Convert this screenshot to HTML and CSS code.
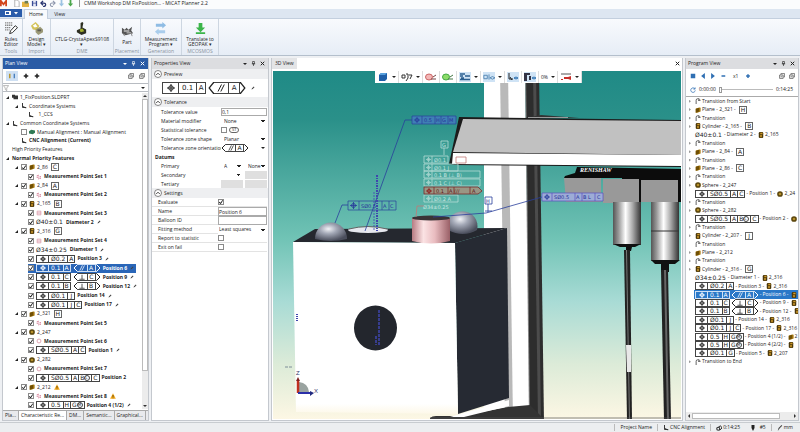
FILE: index.html
```
<!DOCTYPE html>
<html lang="en">
<head>
  <meta charset="UTF-8">
  <meta name="viewport" content="width=device-width, initial-scale=1.0">
  <title>CMM Workshop DM FixPosition... - MiCAT Planner 2.2</title>
  <link rel="stylesheet" href="styles.css">
</head>
<body>
  <!-- shared icons -->
  <svg class="defs" aria-hidden="true">
    <symbol id="pos" viewBox="0 0 8 8"><circle cx="4" cy="4" r="2.3" fill="none" stroke="currentColor"/><path d="M4 0v8M0 4h8" stroke="currentColor"/></symbol>
    <symbol id="par" viewBox="0 0 8 8"><path d="M1 7.500L4.500 .5M3.800 7.500L7.300 .5" stroke="currentColor" fill="none"/></symbol>
    <symbol id="perp" viewBox="0 0 8 8"><path d="M4 1v6M.5 7h7" stroke="currentColor" fill="none"/></symbol>
    <symbol id="hl" viewBox="0 0 5 8" preserveAspectRatio="none"><path d="M5 .5H4.500L1 4l3.500 3.500H5" stroke="currentColor" fill="none"/></symbol>
    <symbol id="hr" viewBox="0 0 5 8" preserveAspectRatio="none"><path d="M0 .5H.5L4 4 .5 7.500H0" stroke="currentColor" fill="none"/></symbol>
    <symbol id="axes" viewBox="0 0 8 8"><path d="M2 0v6h5M3 4l3 3" stroke="#333" stroke-width="1.300" fill="none"/></symbol>
    <symbol id="plane" viewBox="0 0 8 8"><path d="M1 2l5-1.500 1.500.5v5L3 7.500H1z" fill="#a87a10"/><path d="M1 2.500L5.500 1v5L1 7.500z" fill="#6f4f06"/></symbol>
    <symbol id="cyl" viewBox="0 0 8 8"><rect x="1" y="0" width="6" height="8" rx="1.500" fill="#4c380a"/><path d="M3 1h3v2H3zM3 4h2v3H3z" fill="#cf9a2b"/></symbol>
    <symbol id="sph" viewBox="0 0 8 8"><circle cx="4" cy="4" r="3.800" fill="#5a450c"/><circle cx="4" cy="4" r="1.800" fill="#b58f2a"/></symbol>
    <symbol id="ppl" viewBox="0 0 8 8"><path d="M1 2.500l3-1M1 4.500l6-1M3 6.500l4-1" stroke="#cf6a86" stroke-width="1.300" stroke-dasharray="1.500 .6"/></symbol>
    <symbol id="pcy" viewBox="0 0 8 8"><path d="M1.500 1.500h5v5h-5zM1.500 4h5" fill="#fbeef2" stroke="#d99aaa"/></symbol>
    <symbol id="psp" viewBox="0 0 8 8"><circle cx="4" cy="4" r="2.600" fill="#fff" stroke="#d58a9c"/></symbol>
    <symbol id="pen" viewBox="0 0 8 8"><path d="M1 7l1-2.500L5.500 1 7 2.500 3.500 6z" fill="#444"/></symbol>
    <symbol id="warn" viewBox="0 0 8 8"><path d="M4 .3L7.800 7.500H.2z" fill="#f2a91c"/><path d="M4 2.800v2.400M4 6v1" stroke="#3c2a00"/></symbol>
    <symbol id="trans" viewBox="0 0 8 8"><path d="M1.500 8V3q0-2 2-2h2v2.500M4 3h3.500" stroke="#333" fill="none"/></symbol>
    <symbol id="copy" viewBox="0 0 8 8"><path d="M2.500 2.500V.8h5v4.500H6M.8 2.700h4.700v4.500H.8zM2 5h2.500" stroke="#555" fill="none"/></symbol>
    <symbol id="pin" viewBox="0 0 8 8"><path d="M2.500.8h3v3.700h-3zM1.300 4.500h5.400M4 4.500V8" stroke="currentColor" fill="none"/></symbol>
    <symbol id="close" viewBox="0 0 8 8"><path d="M1.200 1.200l5.600 5.600M6.800 1.200L1.200 6.800" stroke="currentColor" stroke-width="1.600"/></symbol>
    <symbol id="up" viewBox="0 0 8 8"><circle cx="4" cy="4" r="3.500" fill="#fff" stroke="#555" stroke-width=".7"/><path d="M2.200 5L4 3.200 5.800 5" stroke="#333" fill="none" stroke-width=".9"/></symbol>
    <symbol id="cross" viewBox="0 0 8 8"><path d="M4 1v6M1 4h6" stroke="currentColor" stroke-width="2"/></symbol>
  </svg>

  <header class="titlebar">
    <svg class="ico app" viewBox="0 0 8 8"><path d="M1 7V1l3 4 3-4v6" stroke="#d2461e" stroke-width="2" fill="none"/></svg>
    <svg class="ico" viewBox="0 0 8 8"><path d="M2 0h3l2 2v6H2z" fill="#fff" stroke="#888" stroke-width=".7"/></svg>
    <svg class="ico" viewBox="0 0 8 8"><path d="M0 2h3l1 1h4v5H0z" fill="#e3b343"/><path d="M3 1h4v3H3z" fill="#6b7f57"/></svg>
    <svg class="ico" viewBox="0 0 8 8"><path d="M1 1h6v6H1z" fill="#3a4d96"/><path d="M2.500 4h3v3h-3zM2.500 1h3v2h-3z" fill="#e6e9f5"/></svg>
    <svg class="ico" viewBox="0 0 8 8"><path d="M1.500 3.500h3q2 0 2 2T3.500 7.500M3.500 1L1 3.500 3.500 6" stroke="#27336f" stroke-width="1.400" fill="none"/></svg>
    <svg class="ico" viewBox="0 0 8 8"><path d="M6.500 3.500h-3q-2 0-2 2T4.500 7.500M4.500 1L7 3.500 4.500 6" stroke="#8e97ad" stroke-width="1.200" fill="none"/></svg>
    <svg class="ico" viewBox="0 0 8 8"><path d="M3 0h2v4h2L4 7.500 1 4h2z" fill="#9cc3e2"/></svg>
    <svg class="ico" viewBox="0 0 8 8"><path d="M3 0h2v4h2L4 7.500 1 4h2z" fill="#4aa64b"/></svg>
    <h1>CMM Workshop DM FixPosition... - MiCAT Planner 2.2</h1>
  </header>

  <nav class="tabs">
    <button class="file" aria-label="File"><svg viewBox="0 0 16 6"><path d="M2 1h6v4H2z" fill="#fff"/><path d="M3 2h3v2H3z" fill="#2c5ca8"/><path d="M11 2h4l-2 2.500z" fill="#fff"/></svg></button>
    <button class="tab active">Home</button>
    <button class="tab">View</button>
  </nav>

  <div class="ribbon">
    <div class="group g-tools">
      <button><svg viewBox="0 0 14 14"><path d="M0 1h8M0 3.500h8M0 6h6M0 8.500h5" stroke="#888" stroke-width="1.400" stroke-dasharray="1.500 .6"/><path d="M5 12.500l1-3L11 4l2.500 2L8 11.500z" fill="#fff" stroke="#222"/></svg>Rules<br>Editor</button>
      <small>Tools</small>
    </div>
    <div class="group g-import">
      <button><svg viewBox="0 0 14 14"><path d="M1 4l5-4 4 4-2 5-5-1z" fill="#d4c35a"/><path d="M3 4l3-2 2 3-3 1z" fill="#fff"/><path d="M6 8l5-3 3 3v3l-5 3-3-3z" fill="#9c9a78"/><path d="M8 8h4v2H8z" fill="#5e5d50"/></svg>Design<br>Model ▾</button>
      <small>Import</small>
    </div>
    <div class="group g-dme">
      <button><svg viewBox="0 0 14 14"><path d="M2 9l4-2V1l2-1 1 1-1 5 4 2v4l-5 2-5-3z" fill="#2d2f22"/><path d="M5 8l3-1 2 3-4 1z" fill="#a3b02c"/></svg>CTLG-CrystaApexS9108<br>▾</button>
      <small>DME</small>
    </div>
    <div class="group g-place">
      <button><svg viewBox="0 0 14 14"><path d="M1 3l3 2 2-2 2 2 4-3-1 4 2 3-4 1-4 1-4-2z" fill="#555"/><path d="M3 6h6v1H3zM6 8h5v1H6z" fill="#eee"/><path d="M2 9l2 3M11 9l1 3" stroke="#888"/></svg>Part</button>
      <small>Placement</small>
    </div>
    <div class="group g-gen">
      <button><svg viewBox="0 0 14 14"><path d="M2 2h7V0l4 3.500L9 7V5H2z" fill="#8fbce4"/><path d="M12 9H5V7l-4 3.500L5 14v-2h7z" fill="#a9cdec"/></svg>Measurement<br>Program ▾</button>
      <small>Generation</small>
    </div>
    <div class="group g-mcos">
      <button><svg viewBox="0 0 14 14"><path d="M5 1h4v5h3L7 11 2 6h3zM2 11h10v2H2z" fill="#3bb54a"/></svg>Translate to<br>GEOPAK ▾</button>
      <small>MCOSMOS</small>
    </div>
  </div>

  <main>
    <section class="panel plan">
      <h2 class="head blue"><span>Plan View</span><i class="down"></i><svg><use href="#pin"/></svg><svg><use href="#close"/></svg></h2>
      <div class="tools">
        <button class="on" aria-label="Order"><svg class="wide" viewBox="0 0 12 8"><path d="M3 1v6" stroke="#b9962f" stroke-width="2"/><path d="M9 1v6" stroke="#2c6bb0" stroke-width="1.500"/></svg></button>
        <button aria-label="Expand"><svg><use href="#cross"/></svg></button>
        <button aria-label="Collapse"><svg><use href="#cross"/></svg></button>
        <span class="grow"></span>
        <button aria-label="Copy"><svg><use href="#copy"/></svg></button>
        <button aria-label="Copy all"><svg><use href="#copy"/></svg></button>
      </div>
      <div class="filter">
        <svg viewBox="0 0 8 8"><path d="M.5.8h7L5 4v3.500L3 6V4z" fill="none" stroke="#888" stroke-width=".8"/></svg>
        <input type="text" aria-label="Filter">
        <i class="down"></i>
      </div>
      <div class="treebox">
        <div class="tree">
          <ul class="top">
            <li><i class="arr"></i><svg class="wide" viewBox="0 0 8 8"><path d="M0 1h4v1h4v5H2V5H0z" fill="#333"/></svg>1_FixPosition.SLDPRT</li>
            <li class="l1"><i class="arr"></i><svg><use href="#axes"/></svg>Coordinate Systems</li>
            <li class="l3"><svg><use href="#axes"/></svg>&nbsp; 1_CCS</li>
            <li><i class="arr"></i><svg><use href="#axes"/></svg>Common Coordinate Systems</li>
            <li class="l2"><label><input type="checkbox"><svg viewBox="0 0 8 8"><path d="M0 3l3-2 5 1v3L5 7 0 6z" fill="#2f7a55"/></svg>Manual Alignment : Manual Alignment</label></li>
            <li class="l2 bold"><svg><use href="#axes"/></svg>CNC Alignment (Current)</li>
            <li class="l0">High Priority Features</li>
            <li class="bold"><i class="arr"></i>Normal Priority Features</li>
          </ul>
          <ul class="features">
            <li class="l1"><i class="arr"></i><label><input type="checkbox" checked><svg><use href="#plane"/></svg>2_86 <b class="datum">C</b></label></li>
            <li class="l3 bold"><label><input type="checkbox" checked><svg><use href="#ppl"/></svg>Measurement Point Set 1</label></li>
            <li class="l1"><i class="arr"></i><label><input type="checkbox" checked><svg><use href="#plane"/></svg>2_84 <b class="datum">A</b></label></li>
            <li class="l3 bold"><label><input type="checkbox" checked><svg><use href="#ppl"/></svg>Measurement Point Set 2</label></li>
            <li class="l1"><i class="arr"></i><label><input type="checkbox" checked><svg><use href="#cyl"/></svg>2_165 <b class="datum">B</b></label></li>
            <li class="l3 bold"><label><input type="checkbox" checked><svg><use href="#pcy"/></svg>Measurement Point Set 3</label></li>
            <li class="l3 bold"><label><input type="checkbox" checked><span class="dim">Ø40±0.1</span>Diameter 2<svg class="pen"><use href="#pen"/></svg></label></li>
            <li class="l1"><i class="arr"></i><label><input type="checkbox" checked><svg><use href="#cyl"/></svg>2_316 <b class="datum">G</b></label></li>
            <li class="l3 bold"><label><input type="checkbox" checked><svg><use href="#pcy"/></svg>Measurement Point Set 4</label></li>
            <li class="l3 bold"><label><input type="checkbox" checked><span class="dim">Ø34±0.25</span>Diameter 1<svg class="pen"><use href="#pen"/></svg></label></li>
            <li class="l3 bold"><label><input type="checkbox" checked><span class="fcf"><i><svg><use href="#pos"/></svg></i><i>Ø0.2</i><i>A</i></span>Position 3<svg class="pen"><use href="#pen"/></svg></label></li>
            <li class="l3 bold sel"><label><input type="checkbox" checked><span class="fcf"><i><svg><use href="#pos"/></svg></i><i>0.1</i><i>A</i></span><span class="fcf hex"><svg><use href="#hl"/></svg><i><svg><use href="#par"/></svg></i><i>A</i><svg><use href="#hr"/></svg></span>Position 6<svg class="pen"><use href="#pen"/></svg></label></li>
            <li class="l3 bold"><label><input type="checkbox" checked><span class="fcf"><i><svg><use href="#pos"/></svg></i><i>0.1</i><i>C</i></span><span class="fcf hex"><svg><use href="#hl"/></svg><i><svg><use href="#perp"/></svg></i><i>C</i><svg><use href="#hr"/></svg></span>Position 9<svg class="pen"><use href="#pen"/></svg></label></li>
            <li class="l3 bold"><label><input type="checkbox" checked><span class="fcf"><i><svg><use href="#pos"/></svg></i><i>0.1</i><i>B</i></span><span class="fcf hex"><svg><use href="#hl"/></svg><i><svg><use href="#perp"/></svg></i><i>B</i><svg><use href="#hr"/></svg></span>Position 12<svg class="pen"><use href="#pen"/></svg></label></li>
            <li class="l3 bold"><label><input type="checkbox" checked><span class="fcf"><i><svg><use href="#pos"/></svg></i><i>Ø0.1</i><i>J</i></span>Position 14<svg class="pen"><use href="#pen"/></svg></label></li>
            <li class="l3 bold"><label><input type="checkbox" checked><span class="fcf"><i><svg><use href="#pos"/></svg></i><i>Ø0.1</i><i>J</i><i>C</i></span>Position 17<svg class="pen"><use href="#pen"/></svg></label></li>
            <li class="l1"><i class="arr"></i><label><input type="checkbox" checked><svg><use href="#plane"/></svg>2_321 <b class="datum">H</b></label></li>
            <li class="l3 bold"><label><input type="checkbox" checked><svg><use href="#ppl"/></svg>Measurement Point Set 5</label></li>
            <li class="l1"><i class="arr"></i><label><input type="checkbox" checked><svg><use href="#sph"/></svg>2_247</label></li>
            <li class="l3 bold"><label><input type="checkbox" checked><svg><use href="#psp"/></svg>Measurement Point Set 6</label></li>
            <li class="l3 bold"><label><input type="checkbox" checked><span class="fcf"><i><svg><use href="#pos"/></svg></i><i>SØ0.5</i><i>A</i><i>C</i></span>Position 1<svg class="pen"><use href="#pen"/></svg></label></li>
            <li class="l1"><i class="arr"></i><label><input type="checkbox" checked><svg><use href="#sph"/></svg>2_282</label></li>
            <li class="l3 bold"><label><input type="checkbox" checked><svg><use href="#psp"/></svg>Measurement Point Set 7</label></li>
            <li class="l3 bold"><label><input type="checkbox" checked><span class="fcf"><i><svg><use href="#pos"/></svg></i><i>SØ0.5</i><i>A</i><i>B<b class="mod">L</b></i><i>C</i></span>Position 2</label></li>
            <li class="l1"><i class="arr"></i><label><input type="checkbox" checked><svg><use href="#plane"/></svg>2_212 <svg class="warn"><use href="#warn"/></svg></label></li>
            <li class="l3 bold"><label><input type="checkbox" checked><svg><use href="#ppl"/></svg>Measurement Point Set 8 <svg class="warn"><use href="#warn"/></svg></label></li>
            <li class="l3 bold"><label><input type="checkbox" checked><span class="fcf"><i><svg><use href="#pos"/></svg></i><i>0.5</i><i>H</i><i>G<b class="mod">M</b></i></span>Position 4 (1/2)<svg class="pen"><use href="#pen"/></svg></label></li>
          </ul>
        </div>
        <div class="vscroll"><i></i><b></b><i class="dn"></i></div>
      </div>
      <nav class="bottom-tabs">
        <button>Pla...</button><button class="active">Characteristic Re...</button><button>DM...</button><button>Semantic...</button><button>Graphical...</button>
      </nav>
    </section>

    <section class="panel props">
      <h2 class="head"><span>Properties View</span><i class="down"></i><svg><use href="#pin"/></svg><svg><use href="#close"/></svg></h2>
      <h3><svg><use href="#up"/></svg>Preview</h3>
      <div class="preview">
        <span class="fcf big"><i><svg><use href="#pos"/></svg></i><i>0.1</i><i>A</i></span><span class="fcf hex big"><svg><use href="#hl"/></svg><i><svg><use href="#par"/></svg></i><i>A</i><svg><use href="#hr"/></svg></span><svg class="pen"><use href="#pen"/></svg>
      </div>
      <h3><svg><use href="#up"/></svg>Tolerance</h3>
      <div class="fields">
        <label for="tol">Tolerance value</label><input id="tol" type="text" value="0,1">
        <label for="mat">Material modifier</label><select id="mat"><option>None</option></select>
        <label for="stat">Statistical tolerance</label><span class="pair"><input id="stat" type="checkbox"><em>ST</em></span>
        <label for="shape">Tolerance zone shape</label><select id="shape"><option>Planar</option></select>
        <label for="orient">Tolerance zone orientation</label><button id="orient" class="orient"><span class="fcf hex"><svg><use href="#hl"/></svg><i><svg><use href="#par"/></svg></i><i>A</i><svg><use href="#hr"/></svg></span><i class="down"></i></button>
        <h4>Datums</h4>
        <label for="d1">Primary</label><span class="two"><select id="d1"><option>A</option></select><select aria-label="Primary modifier"><option>None</option></select></span>
        <label for="d2">Secondary</label><span class="two"><select id="d2"></select><select class="off" disabled aria-label="Secondary modifier"></select></span>
        <label for="d3">Tertiary</label><span class="two"><select id="d3" class="off" disabled></select><select class="off" disabled aria-label="Tertiary modifier"></select></span>
      </div>
      <h3><svg><use href="#up"/></svg>Settings</h3>
      <div class="fields settings">
        <label for="ev">Evaluate</label><span><input id="ev" type="checkbox" checked></span>
        <label for="nm">Name</label><input id="nm" type="text" value="Position 6">
        <label for="bal">Balloon ID</label><input id="bal" type="text">
        <label for="fit">Fitting method</label><select id="fit"><option>Least squares</option></select>
        <label for="rep">Report to statistic</label><span><input id="rep" type="checkbox"></span>
        <label for="ex">Exit on fail</label><span><input id="ex" type="checkbox"></span>
      </div>
    </section>

    <section class="panel view3d">
      <h2 class="head plain"><span>3D View</span><svg><use href="#close"/></svg></h2>
      <div class="viewport">
        <svg class="scene" viewBox="272 71 410 348" preserveAspectRatio="xMidYMid slice" role="img" aria-label="Workpiece under probe">
          <defs>
            <linearGradient id="sky" x1="0" y1="0" x2="0" y2="1"><stop offset="0" stop-color="#1f8a86"/><stop offset=".14" stop-color="#2a9089"/><stop offset=".48" stop-color="#70c3b5"/><stop offset=".66" stop-color="#a8dbd5"/><stop offset=".84" stop-color="#dcebd8"/><stop offset="1" stop-color="#fdf7e4"/></linearGradient>
            <linearGradient id="face" x1="0" y1="0" x2="0" y2="1"><stop offset=".94" stop-color="#fff"/><stop offset="1" stop-color="#fdf8e8"/></linearGradient>
            <linearGradient id="metal"><stop offset="0" stop-color="#555"/><stop offset=".2" stop-color="#999"/><stop offset=".45" stop-color="#fff"/><stop offset=".7" stop-color="#aaa"/><stop offset="1" stop-color="#333"/></linearGradient>
            <linearGradient id="pink"><stop offset="0" stop-color="#b77b82"/><stop offset=".3" stop-color="#fbe3e4"/><stop offset=".6" stop-color="#e9bcc0"/><stop offset="1" stop-color="#9a6067"/></linearGradient>
            <radialGradient id="ball" cx=".42" cy=".35" r=".65"><stop offset="0" stop-color="#f2f3f7"/><stop offset=".4" stop-color="#a3a8b6"/><stop offset="1" stop-color="#4a4e5c"/></radialGradient>
          </defs>
          <rect x="200" y="70" width="600" height="350" fill="url(#sky)"/>
          <!-- column -->
          <path d="M484 71h41l5 350h-46z" fill="#fff"/>
          <path d="M500 71h8l5 350h-8z" fill="#b9b9b9"/>
          <path d="M525 71h2l5 350h-3z" fill="#888"/>
          <path d="M526 71h13l5 350h-14z" fill="#2d2d2d"/>
          <path d="M533 71h3l5 350h-3z" fill="#4c4c4c"/>
          <path d="M525 118l16-3 38 3z" fill="#333"/><path d="M528 118v-1h40v1z" fill="#999"/>
          <!-- bridge -->
          <path d="M459 117l223 3v47l-227-2-6-1z" fill="#1c1c1c"/>
          <path d="M463 119l219 2v34l-229-3z" fill="#c1c1c1"/>
          <path d="M453 153l229 2v11l-230-2z" fill="#fff"/>
          <!-- probe head -->
          <path d="M577 167l105 2v33h-60V178h-58l1-2 10-3z" fill="#0c0c0c"/>
          <path d="M564 178h37v24h-35zM603 179h36v24h-36zM641 180h37v22h-37z" fill="#999"/>
          <text x="580" y="172" class="brand">RENISHAW</text>
          <path d="M613 202h28v43h-28z" fill="url(#metal)"/><path d="M613 244h28l-6 3h-3l-1 4h-5v-4h-6z" fill="#111"/>
          <path d="M651 202h28v59h-28z" fill="url(#metal)"/><path d="M651 231h28" stroke="#333"/><path d="M651 260h29l-5 4h-6v8h-8v-8h-6z" fill="#111"/>
          <path d="M624 250h6l2 170h-5z" fill="#222"/><path d="M626 250h1l3 170h-1z" fill="#777"/><path d="M626 345h5v27h-4z" fill="#e8e8e8"/>
          <path d="M661 270h7l3 150h-7z" fill="#222"/><path d="M664 270h2l3 150h-2z" fill="#666"/>
          <!-- base -->
          <path d="M430 418q2-2 6-2h24l48-9 22-2 13 13v3H430z" fill="#333"/>
          <path d="M450 417l59-17v6l-45 11z" fill="#fff"/>
          <path d="M430 418h252" stroke="#555" stroke-width=".7"/>
          <!-- block -->
          <path d="M293 242l22-13 192-1-52 15z" fill="#25282f"/>
          <path d="M455 243l52-15 2 170-51 16z" fill="#262a33"/>
          <path d="M293 242l162 1 3 171-162-2z" fill="url(#face)"/>
          <ellipse cx="368" cy="230" rx="20" ry="3" fill="#e6e8ee"/><path d="M349 229q19-5 38 0" stroke="#666" fill="none"/>
          <path d="M315 239a15.500 16 0 1 1 32 0q-16 4-32 0z" fill="url(#ball)"/>
          <path d="M448 230a15 15 0 1 1 29 0q-14 8-29 0z" fill="url(#ball)"/>
          <path d="M412 218v23q19 5 38 0v-23z" fill="url(#pink)"/><ellipse cx="431" cy="218" rx="19" ry="2.500" fill="#3a3336"/>
          <ellipse cx="375.500" cy="328" rx="21.500" ry="22.500" fill="#23262d"/>
          <!-- callouts -->
          <g fill="none" stroke="#2a3f9c">
            <path d="M365 231l40-111h7M335 223l7-18h6M433 217l53-4 56-16" stroke-width=".8"/>
            <path d="M412 116h44v8h-44zM422 116v8M435 116v8M441 116v8M448 116v8" fill="#3f7fb4" stroke-width=".7"/>
            <path d="M348 201h48v9h-48zM359 201v9M382 201v9M389 201v9" stroke-width=".7"/>
            <path d="M542 193h61v8h-61zM552 193v8M575 193v8M582 193v8M595 193v8" stroke="#5a4fc0" fill="#9dacd6" stroke-width=".7"/>
            <path d="M485 197h7v7h-7zM488 204v8M485 211h7" stroke-width=".8"/>
          </g>
          <g class="ctext blue3d">
            <text x="424" y="122">0.5</text><text x="436" y="122">H</text><text x="442" y="122">G</text><text x="449" y="122">M</text>
            <text x="361" y="208">SØ0.5</text><text x="383" y="208">A</text><text x="390" y="208">C</text>
            <text x="554" y="199">SØ0.5</text><text x="576" y="199">A</text><text x="583" y="199">B L</text><text x="597" y="199">C</text>
            <text x="486" y="203">H</text>
          </g>
          <g color="#2a3f9c"><use href="#pos" x="414" y="117" width="6" height="6"/><use href="#pos" x="350" y="202" width="7" height="7"/><use href="#pos" x="544" y="194" width="6" height="6"/></g>
          <g stroke="#3f46ae" fill="none"><path d="M377 175v56" stroke-width="2" stroke-dasharray="2 1 1 1"/><path d="M379 310v36M376 336v9" stroke-width="1.500" stroke-dasharray="3 1"/><path d="M374 192v38" stroke-width=".8" stroke-dasharray="2 1"/><path d="M297 314v8" stroke-width="2" stroke-dasharray="1 1"/></g>
          <g fill="none" stroke="#b5dcd6" stroke-width=".8">
            <path d="M441 141h7v7h-7zM444 148v7"/>
            <path d="M424 156h24v7h-24zM432 156v7M424 164h34v7h-34zM432 164v7M424 171h56v7h-56zM432 171v7M424 179h56v7h-56zM432 179v7M424 195h34v7h-34zM432 195v7"/>
          </g>
          <g class="ctext white3d">
            <text x="442" y="147">G</text><text x="434" y="162">Ø0.1</text><text x="434" y="170">Ø0.1 J</text><text x="434" y="177">0.1 B ⟨⊥ B⟩</text><text x="434" y="185">0.1 C ⟨⊥ C⟩</text><text x="434" y="201">Ø0.2 A</text><text x="423" y="209">Ø34±0.25</text>
          </g>
          <g color="#b5dcd6"><use href="#pos" x="426" y="157" width="5" height="5"/><use href="#pos" x="426" y="165" width="5" height="5"/><use href="#pos" x="426" y="172" width="5" height="5"/><use href="#pos" x="426" y="180" width="5" height="5"/><use href="#pos" x="426" y="196" width="5" height="5"/></g>
          <path d="M456 157h10v6h-10zM416 217l1-11h7" fill="none" stroke="#c07a76" stroke-width=".8"/>
          <path d="M424 187h54l4 4-4 3h-54zM434 187v7M448 187v7M454 187v7M470 187v7" fill="#9a9684" stroke="#7a2a2a" stroke-width=".8"/>
          <use href="#pos" x="426" y="188" width="6" height="6" color="#8c1d1d"/>
          <text x="436" y="193" class="ctext red3d">0.1</text><text x="449" y="193" class="ctext red3d">A ⟨//</text><text x="472" y="193" class="ctext red3d">A</text>
          <!-- axis triad -->
          <path d="M299 392v-10q9 1 10 10z" fill="#9aa3a0"/><path d="M298 393v-12" stroke="#c03020" stroke-width="2.500"/><path d="M296 381l2-4 2 4z" fill="#802020"/>
          <path d="M298 393h13" stroke="#2a2fa8" stroke-width="2"/><path d="M310 391l4 2-4 3z" fill="#222a80"/>
          <text x="296" y="375" class="axis">Z</text><text x="314" y="393" class="axis">X</text>
          <path d="M285 367h8" stroke="#678" stroke-width=".8" stroke-dasharray="3 1"/>
        </svg>
        <div class="viewbar">
          <button aria-label="Cube"><svg viewBox="0 0 10 8"><path d="M1 2l2-2h6v6L7 8H1z" fill="#1f5fa8"/><path d="M1 2l2-2h6L7 2z" fill="#58a0dd"/></svg><i class="down"></i></button>
          <button aria-label="Orientation"><svg viewBox="0 0 10 8"><path d="M0 2h3v3H0zM4 1h2v4L4 8M7 2h3L8 6" stroke="#333" fill="none"/></svg><i class="down"></i></button>
          <button aria-label="Hide"><svg viewBox="0 0 12 8"><ellipse cx="4" cy="4" rx="3.500" ry="3" fill="#f3b6b6" stroke="#c66"/><path d="M6 6h5M8 4l3-2" stroke="#744"/></svg></button>
          <button aria-label="Show"><svg viewBox="0 0 12 8"><ellipse cx="4" cy="4" rx="3.500" ry="3" fill="#8ddc6a" stroke="#4a4"/><path d="M6 6h5M8 4l3-2" stroke="#474"/></svg></button>
          <button aria-label="Labels"><svg class="on" viewBox="0 0 12 8"><path d="M1 1h5M1 3h3M6 3h5M1 6.500h10M2 5h3" stroke="#2c6090" stroke-width="1.300"/></svg><i class="down"></i></button>
          <button aria-label="Points"><svg class="on" viewBox="0 0 14 8"><path d="M1 2h4v4H1zM7 1v6M8 5q3-3 6 0-3 3-6 0" stroke="#4a7fae" fill="none"/></svg><i class="down"></i></button>
          <button aria-label="Axes"><svg class="on" viewBox="0 0 12 8"><path d="M2 0v6h4M3 4l2 3" stroke="#222" fill="none"/><path d="M7 5q2-2 4 0-2 2-4 0" stroke="#2c70b0" fill="none"/></svg></button>
          <button aria-label="Machine"><svg class="on" viewBox="0 0 12 8"><path d="M0 0h6v2H3v6H0zM5 3h2v4H5z" fill="#334"/><path d="M8 5q2-2 4 0-2 2-4 0" stroke="#2c70b0" fill="none"/></svg></button>
          <button class="pct">0%<i class="down"></i></button>
          <button aria-label="Record"><svg viewBox="0 0 12 8"><path d="M1 1h10" stroke="#555"/><path d="M4 4h4l3-1v4l-3-1H4zM1 6h2v1H1z" fill="#c8302a"/></svg><i class="down"></i></button>
        </div>
      </div>
    </section>

    <section class="panel program">
      <h2 class="head"><span>Program View</span><i class="down"></i><svg><use href="#pin"/></svg><svg><use href="#close"/></svg></h2>
      <div class="play">
        <button aria-label="Stop"><svg viewBox="0 0 8 8"><path d="M1 1h6v6H1z"/></svg></button>
        <button aria-label="Back"><svg viewBox="0 0 8 8"><path d="M6.500 0v8L1.500 4z"/></svg></button>
        <button aria-label="Play"><svg viewBox="0 0 8 8"><path d="M1.500 0v8l5-4z"/></svg></button>
        <button aria-label="Slower"><svg viewBox="0 0 8 8"><path d="M2 3h5v2H2z"/></svg></button>
        <span>x1</span>
        <button aria-label="Faster"><svg viewBox="0 0 8 8"><path d="M3 1.500h2V3h1.500v2H5v1.500H3V5H1.500V3H3z"/></svg></button>
        <span class="grow"></span>
        <button aria-label="Copy"><svg><use href="#copy"/></svg></button>
        <button aria-label="Copy all"><svg><use href="#copy"/></svg></button>
      </div>
      <div class="time">
        <svg viewBox="0 0 8 8"><path d="M6.500 2.500A3 3 0 1 0 7 4.500M6.800.5v2.300H4.500" fill="none" stroke="#2f6fb3"/></svg>
        <span>0:00:00</span><input type="range" min="0" max="100" value="0" aria-label="Time"><span>0:14:25</span>
      </div>
      <ul class="steps">
        <li><i class="ex"></i><svg><use href="#trans"/></svg>Transition from Start</li>
        <li><i class="ex"></i><svg><use href="#plane"/></svg>Plane - 2_321 - <b class="datum">H</b></li>
        <li><i class="ex"></i><svg><use href="#trans"/></svg>Transition</li>
        <li><i class="ex"></i><svg><use href="#cyl"/></svg>Cylinder - 2_165 - <b class="datum">B</b></li>
        <li><i class="ex none"></i><span class="dim">Ø40±0.1</span>- Diameter 2 - <svg><use href="#cyl"/></svg>2_165</li>
        <li><i class="ex"></i><svg><use href="#trans"/></svg>Transition</li>
        <li><i class="ex"></i><svg><use href="#plane"/></svg>Plane - 2_84 - <b class="datum">A</b></li>
        <li><i class="ex"></i><svg><use href="#trans"/></svg>Transition</li>
        <li><i class="ex"></i><svg><use href="#plane"/></svg>Plane - 2_86 - <b class="datum">C</b></li>
        <li><i class="ex"></i><svg><use href="#trans"/></svg>Transition</li>
        <li><i class="ex"></i><svg><use href="#sph"/></svg>Sphere - 2_247</li>
        <li><i class="ex none"></i><span class="fcf"><i><svg><use href="#pos"/></svg></i><i>SØ0.5</i><i>A</i><i>C</i></span>- Position 1 - <svg><use href="#sph"/></svg>2_24</li>
        <li><i class="ex"></i><svg><use href="#trans"/></svg>Transition</li>
        <li><i class="ex"></i><svg><use href="#sph"/></svg>Sphere - 2_282</li>
        <li><i class="ex none"></i><span class="fcf"><i><svg><use href="#pos"/></svg></i><i>SØ0.5</i><i>A</i><i>B<b class="mod">L</b></i><i>C</i></span>- Position 2 - <svg><use href="#sph"/></svg></li>
        <li><i class="ex"></i><svg><use href="#trans"/></svg>Transition</li>
        <li><i class="ex"></i><svg><use href="#cyl"/></svg>Cylinder - 2_207 - <b class="datum">J</b></li>
        <li><i class="ex none"></i><svg><use href="#trans"/></svg>Transition</li>
        <li><i class="ex"></i><svg><use href="#plane"/></svg>Plane - 2_212</li>
        <li><i class="ex"></i><svg><use href="#trans"/></svg>Transition</li>
        <li><i class="ex"></i><svg><use href="#cyl"/></svg>Cylinder - 2_316 - <b class="datum">G</b></li>
        <li><i class="ex none"></i><span class="dim">Ø34±0.25</span>- Diameter 1 - <svg><use href="#cyl"/></svg>2_316</li>
        <li><i class="ex none"></i><span class="fcf"><i><svg><use href="#pos"/></svg></i><i>Ø0.2</i><i>A</i></span>- Position 3 - <svg><use href="#cyl"/></svg>2_316</li>
        <li class="sel"><i class="ex none"></i><span class="fcf"><i><svg><use href="#pos"/></svg></i><i>0.1</i><i>A</i></span><span class="fcf hex"><svg><use href="#hl"/></svg><i><svg><use href="#par"/></svg></i><i>A</i><svg><use href="#hr"/></svg></span>- Position 6 - <svg><use href="#cyl"/></svg></li>
        <li><i class="ex none"></i><span class="fcf"><i><svg><use href="#pos"/></svg></i><i>0.1</i><i>C</i></span><span class="fcf hex"><svg><use href="#hl"/></svg><i><svg><use href="#perp"/></svg></i><i>C</i><svg><use href="#hr"/></svg></span>- Position 9 - <svg><use href="#cyl"/></svg></li>
        <li><i class="ex none"></i><span class="fcf"><i><svg><use href="#pos"/></svg></i><i>0.1</i><i>B</i></span><span class="fcf hex"><svg><use href="#hl"/></svg><i><svg><use href="#perp"/></svg></i><i>B</i><svg><use href="#hr"/></svg></span>- Position 12 - <svg><use href="#cyl"/></svg></li>
        <li><i class="ex none"></i><span class="fcf"><i><svg><use href="#pos"/></svg></i><i>Ø0.1</i><i>J</i></span>- Position 14 - <svg><use href="#cyl"/></svg>2_316</li>
        <li><i class="ex none"></i><span class="fcf"><i><svg><use href="#pos"/></svg></i><i>Ø0.1</i><i>J</i><i>C</i></span>- Position 17 - <svg><use href="#cyl"/></svg>2_316</li>
        <li><i class="ex none"></i><span class="fcf"><i><svg><use href="#pos"/></svg></i><i>0.5</i><i>H</i><i>G<b class="mod">M</b></i></span>- Position 4 (1/2) - <svg><use href="#plane"/></svg>2</li>
        <li><i class="ex none"></i><span class="fcf"><i><svg><use href="#pos"/></svg></i><i>0.5</i><i>H</i><i>G<b class="mod">M</b></i></span>- Position 4 (2/2) - <svg><use href="#cyl"/></svg></li>
        <li><i class="ex none"></i><span class="fcf"><i><svg><use href="#pos"/></svg></i><i>Ø0.1</i><i>G</i></span>- Position 5 - <svg><use href="#cyl"/></svg>2_207</li>
        <li><i class="ex"></i><svg><use href="#trans"/></svg>Transition to End</li>
      </ul>
      <div class="hscroll"><i></i><b></b><i class="rt"></i></div>
    </section>
  </main>

  <footer class="status">
    <span>Project Name</span>
    <span><svg><use href="#axes"/></svg>CNC Alignment</span>
    <span><svg viewBox="0 0 8 8"><circle cx="3" cy="5" r="2" fill="none" stroke="#333" stroke-width="1.500"/><path d="M3 3l3-2 2 3-3 3" stroke="#333" stroke-width="1.300" fill="none"/></svg>0:14:25</span>
    <span class="open"><svg viewBox="0 0 8 8"><path d="M2 0h4v4L4 8 2 4z" fill="#222"/></svg>&nbsp; #5</span>
    <span><svg viewBox="0 0 8 8"><path d="M1 8l1-4 4-4 1 1-3 3z" fill="#444"/></svg>mm</span>
  </footer>
</body>
</html>
```
FILE: styles.css
```
* {
  margin: 0;
  padding: 0;
  box-sizing: border-box;
}

html, body {
  height: 100%;
  overflow: hidden;
}

body {
  display: flex;
  flex-direction: column;
  background: #eef0f3;
  color: #222;
  font-family: "Open Sans", "Noto Sans", sans-serif;
  font-size: 5px;
  line-height: 7px;
}

button, input, select {
  font: inherit;
  color: inherit;
  background: none;
  border: none;
  border-radius: 0;
  appearance: none;
  min-width: 0;
}

ul { list-style: none; }
i, em { font-style: normal; }
svg { width: 6px; height: 6px; flex: none; }
.defs { position: absolute; width: 0; height: 0; }
.grow { flex: 1; }

/* title, tabs, ribbon */
.titlebar {
  display: flex;
  align-items: center;
  gap: 2px;
  height: 9px;
  padding-bottom: 2px;
  background: #fbfcfd;
}

.titlebar .ico { width: 7px; height: 7px; }
.titlebar .app { margin-right: 4px; }

.titlebar h1 {
  font-size: 5px;
  font-weight: normal;
  margin-left: 3px;
  padding-left: 4px;
  border-left: 1px solid #999;
}

.tabs {
  display: flex;
  align-items: stretch;
  height: 10px;
  background: #dde6f1;
  border-bottom: 1px solid #c3cfde;
}

.file {
  width: 22px;
  height: 8px;
  background: #2a5caa;
}

.file svg { display: block; width: 16px; height: 6px; margin: 0 auto; }

.tab { padding: 1px 6px 0; }

.tab.active {
  margin: 0 0 -1px 2px;
  padding: 0 4px;
  background: #f8fafd;
  border: 1px solid #c3cfde;
  border-bottom: none;
}

.ribbon {
  display: flex;
  height: 37px;
  background: linear-gradient(#f8fafd, #e6edf6);
  border-bottom: 1px solid #b4bfcc;
}

.group {
  display: flex;
  flex-direction: column;
  align-items: center;
  justify-content: space-between;
  border-right: 1px solid #cdd6e1;
  padding: 2px 0 1px;
}

.group button { line-height: 5px; height: 27px; }
.group svg { display: block; width: 13px; height: 13px; margin: 0 auto 2px; }
.group small { font-size: 5px; line-height: 6px; color: #8a93a0; }
.g-tools { width: 23px; }
.g-import { width: 28px; }
.g-dme { width: 63px; }
.g-place { width: 27px; }
.g-gen { width: 41px; }
.g-mcos { width: 37px; }

/* panels */
main {
  flex: 1;
  min-height: 0;
  display: grid;
  grid-template-columns: 147px 118px 1fr 114px;
  gap: 2px;
  padding: 2px 1px 1px 2px;
}

.panel {
  display: flex;
  flex-direction: column;
  min-width: 0;
  min-height: 0;
  background: #fff;
  border: 1px solid #c4c8ce;
  border-top: none;
  overflow: hidden;
}

.head {
  display: flex;
  align-items: center;
  gap: 4px;
  height: 11px;
  flex: none;
  padding: 0 3px 0 2px;
  background: #dcdde0;
  font-size: 5px;
  font-weight: normal;
}

.head span { flex: 1; }
.head svg { width: 5px; height: 5px; }
.head.blue { background: #2a5ba5; color: #fff; }
.head.plain { background: #fff; padding: 0 2px 0 0; }
.head.plain span { flex: none; background: #e3e4e6; padding: 2px 3px; margin-right: auto; }

.down {
  border: 2px solid transparent;
  border-top-color: currentColor;
  border-bottom: none;
  width: 4px;
  height: 2px;
  flex: none;
}

.tools, .play {
  display: flex;
  align-items: center;
  gap: 5px;
  height: 14px;
  flex: none;
  padding: 0 3px;
}

.tools button, .play button { display: flex; }
.tools .on { background: #cfe0f3; padding: 2px 0; }
.tools .wide { width: 12px; }

.filter {
  display: flex;
  align-items: center;
  height: 9px;
  flex: none;
  border: 1px solid #b8bcc2;
  border-width: 1px 0;
  padding-right: 3px;
}

.filter input { flex: 1; height: 7px; }

.treebox { flex: 1; display: flex; min-height: 0; padding-top: 1px; }

.tree { flex: 1; min-width: 0; display: flex; flex-direction: column; overflow: hidden; }
.tree ul { display: flex; flex-direction: column; }
.tree .top { flex: 70 1 0; }
.tree .features { flex: 248 1 0; }

.tree li {
  flex: 1 1 0;
  min-height: 0;
  display: flex;
  align-items: center;
  gap: 2px;
  padding-left: 3px;
  white-space: nowrap;
}

.tree label { display: flex; align-items: center; gap: 2px; height: 100%; }
.tree li.l0 { padding-left: 9px; }
.tree li.l1 { padding-left: 12px; }
.tree li.l2 { padding-left: 18px; }
.tree li.l3 { padding-left: 25px; }
.bold { font-weight: bold; }
.sel label { background: #2a66b8; color: #fff; padding-right: 2px; }

.arr {
  width: 0;
  height: 0;
  border-left: 3px solid transparent;
  border-bottom: 3px solid #222;
  margin-right: 1px;
}

input[type="checkbox"] {
  display: block;
  width: 6px;
  height: 6px;
  flex: none;
  background: #fff;
  border: 1px solid #8a8a8a;
}

input[type="checkbox"]:checked::after {
  content: "";
  display: block;
  width: 4px;
  height: 4px;
  background: #111;
  clip-path: polygon(0 45%, 40% 70%, 85% 0, 100% 15%, 45% 100%, 0 70%);
}

.datum {
  font: 6px/6px "DejaVu Sans", sans-serif;
  border: 1px solid #666;
  min-width: 8px;
  height: 8px;
  text-align: center;
  margin-left: 1px;
}

.dim { font: 6px/8px "DejaVu Sans", sans-serif; padding-right: 1px; }

/* feature control frames */
.fcf {
  display: inline-flex;
  height: 8px;
  border: 1px solid #444;
  font: 6px/6px "DejaVu Sans", sans-serif;
  color: #222;
  background: #fff;
}

.fcf i {
  display: flex;
  justify-content: center;
  min-width: 7px;
  padding: 0 1px;
  border-left: 1px solid #444;
}

.fcf i:first-child { border-left: none; width: 11px; }
.fcf i:nth-child(2) { padding: 0 2px; }
.fcf i svg { width: 6px; height: 6px; }
.fcf.hex { border-width: 0; }
.fcf.hex > svg { width: 5px; height: 8px; }
.fcf.hex i { border: solid #444; border-width: 1px 0; padding: 0 1px; min-width: 9px; }
.fcf.hex i + i { border-width: 1px; }

.mod {
  font-weight: normal;
  border: 1px solid #444;
  border-radius: 3px;
  width: 6px;
  height: 6px;
  line-height: 4px;
  font-size: 4px;
}

.sel .fcf, .sel .fcf i { border-color: #cfe0f5; color: #fff; }
.sel .fcf { background: #2a66b8; }
.pen { width: 4px; height: 4px; margin-left: 1px; }
.warn { margin-left: 1px; }

.vscroll, .hscroll { display: flex; background: #ececec; flex: none; }
.vscroll { width: 6px; flex-direction: column; align-items: center; margin-bottom: 1px; }
.vscroll i { border: 2px solid transparent; border-bottom-color: #333; border-top: none; margin: 2px 0; }
.vscroll b { width: 6px; background: #fff; border: 1px solid #bbb; flex: 1; }
.vscroll i.dn { border: 2px solid transparent; border-top-color: #333; border-bottom: none; margin-top: 34px; }

.bottom-tabs { display: flex; height: 10px; flex: none; background: #e9eaed; border-top: 1px solid #aaa; }
.bottom-tabs button { padding: 0 2px; border-right: 1px solid #aaa; white-space: nowrap; }
.bottom-tabs .active { background: #fff; }

/* properties */
h3 {
  display: flex;
  align-items: center;
  gap: 2px;
  height: 10px;
  flex: none;
  padding-left: 2px;
  background: #eeeff1;
  font-size: 5px;
  font-weight: normal;
}

h3 svg { width: 8px; height: 8px; }
h4 { font-size: 5px; line-height: 8px; grid-column: 1 / 3; margin-left: -6px; }

.preview { display: flex; align-items: center; gap: 2px; height: 18px; padding-left: 10px; }
.fcf.big { height: 12px; font-size: 7px; line-height: 10px; }
.fcf.big i { min-width: 9px; align-items: center; }
.fcf.big i:first-child { width: 15px; }
.fcf.big i:nth-child(2) { padding: 0 3px; }
.fcf.big i svg { width: 8px; height: 8px; }
.fcf.hex.big > svg { height: 12px; width: 6px; }
.fcf.hex.big i:nth-child(2) { padding: 0 3px; }
.fcf.hex.big i + i { min-width: 12px; }
.preview .pen { margin-left: 3px; }

.fields {
  display: grid;
  grid-template-columns: 60px 1fr;
  grid-auto-rows: minmax(8px, auto);
  align-items: center;
  row-gap: 1px;
  padding: 1px 1px 0 9px;
}

.fields label { white-space: nowrap; }
.fields input[type="text"] { width: 100%; height: 8px; border: 1px solid #aaa; }
.pair, .two { display: flex; align-items: center; gap: 2px; }
.pair em { font-size: 4px; line-height: 4px; border: 1px solid #666; border-radius: 3px; padding: 0 2px; }
.two select { flex: 1; width: 50%; }

select {
  width: 100%;
  height: 8px;
  padding-left: 3px;
  background: conic-gradient(from -45deg at 50% 100%, #222 90deg, transparent 0) right 2px center / 4px 2px no-repeat;
}

select.off { background: #d2d2d2; }
.orient { display: flex; align-items: center; justify-content: space-between; padding-right: 2px; }

.settings { padding: 0 1px 0 0; grid-template-columns: 66px 1fr; row-gap: 0; }
.settings > * { min-height: 9px; }
.settings label { padding-left: 6px; border-bottom: 1px solid #e3e3e3; line-height: 8px; }
.settings > span { display: flex; align-items: center; border-bottom: 1px solid #e3e3e3; }
.settings select { padding-left: 1px; }

/* 3D */
.viewport { flex: 1; min-height: 0; position: relative; margin: 2px 1px 1px; overflow: hidden; background: #2a9089; }
.scene { display: block; width: 100%; height: 100%; }
.ctext { font: 5px "DejaVu Sans", sans-serif; }
.blue3d { fill: #26309a; }
.white3d { fill: #c6e6e1; }
.red3d { fill: #5a1212; }
.brand { font: italic bold 6px "Liberation Serif", serif; fill: #fff; }
.axis { font: 6px "Liberation Sans", sans-serif; fill: #33386a; }

.viewbar {
  position: absolute;
  top: 0;
  left: 25%;
  display: flex;
  height: 12px;
  background: #fff;
}

.viewbar button { display: flex; align-items: center; gap: 3px; padding: 0 2px; border-right: 1px solid #ddd; }
.viewbar svg { width: 12px; height: 8px; }
.viewbar .on { height: 10px; background: #cfe3f5; }

/* program */
.play { gap: 4px; padding: 0 3px 0 4px; fill: #2f6fb3; }
.play span { margin: 0 3px; }
.time { display: flex; align-items: center; gap: 3px; height: 14px; flex: none; padding: 0 5px 0 4px; border-bottom: 1px solid #aaa; }
.time span { white-space: nowrap; }
.time input { flex: 1; height: 7px; background: linear-gradient(#bbb, #bbb) center / 100% 1px no-repeat; }
.time input::-webkit-slider-thumb { appearance: none; width: 3px; height: 6px; background: #fff; border: 1px solid #999; }

.steps { flex: 1; min-height: 0; display: flex; flex-direction: column; overflow: hidden; padding: 0 0 46px 3px; }
.steps li { flex: 1 1 0; min-height: 0; display: flex; align-items: center; gap: 1px; white-space: pre; }
.ex { width: 5px; flex: none; }
.ex::before { content: ""; display: block; width: 2px; height: 3px; background: #999; clip-path: polygon(0 0, 100% 50%, 0 100%); }
.ex.none::before { display: none; }
.steps .sel { background: linear-gradient(#2a78c8, #2a78c8) 5px 0 no-repeat; color: #fff; }
.steps .sel .fcf { background: #2a78c8; }

.hscroll { height: 8px; align-items: center; justify-content: space-between; padding: 0 2px; }
.hscroll b { height: 6px; flex: 1; margin: 0 14px 0 2px; background: #fff; border: 1px solid #bbb; }
.hscroll i { border: 2px solid transparent; border-right-color: #333; border-left: none; }
.hscroll i.rt { border: 2px solid transparent; border-left-color: #333; border-right: none; }

/* status bar */
.status {
  display: flex;
  align-items: center;
  justify-content: flex-end;
  height: 10px;
  flex: none;
  background: #eceef0;
  border-top: 1px solid #c8ccd0;
  padding-right: 2px;
}

.status span { display: flex; align-items: center; gap: 1px; padding: 0 5px; border-left: 1px solid #bbb; }
.status .open { border-left: none; }
```
